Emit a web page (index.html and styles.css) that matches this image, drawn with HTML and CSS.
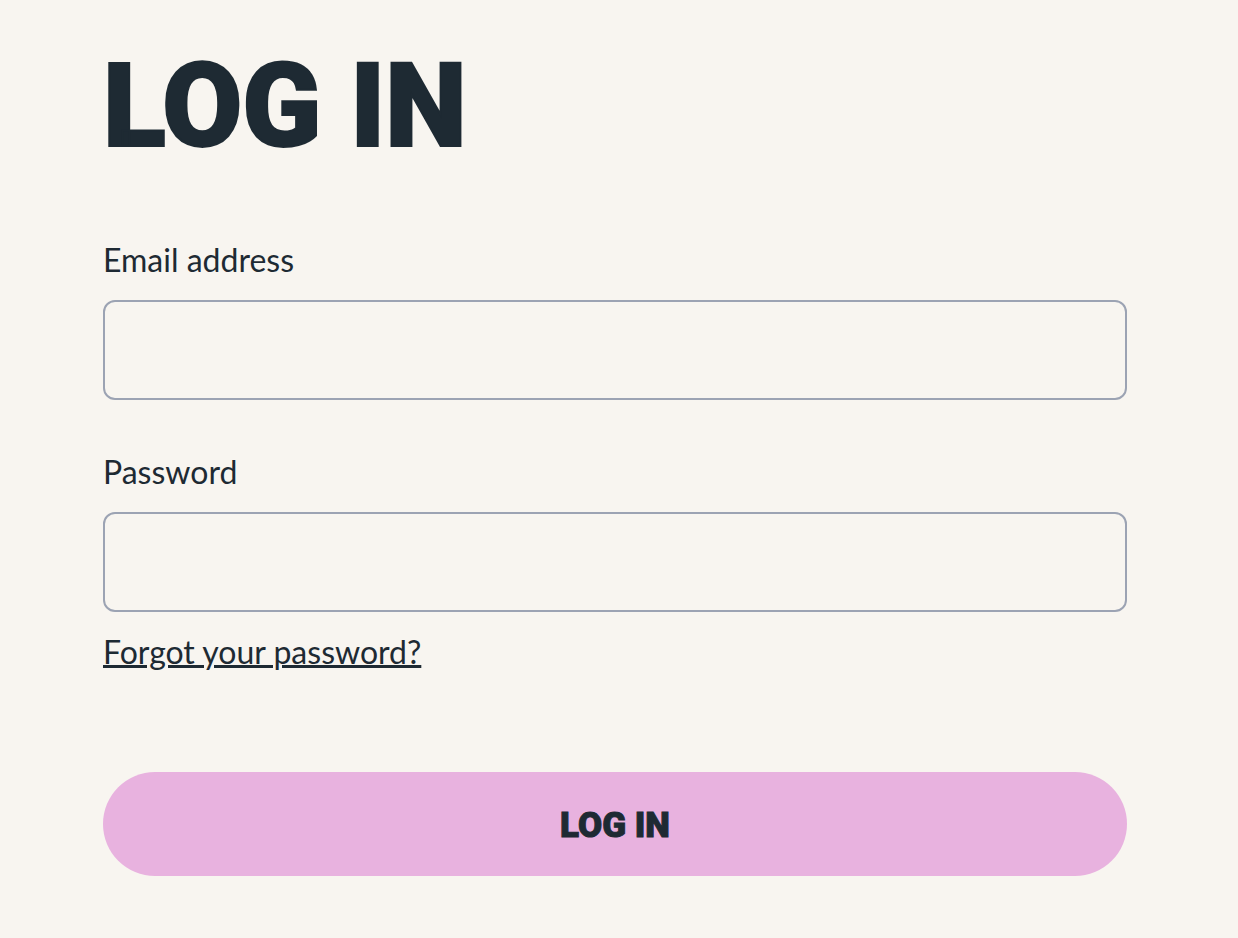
FILE: index.html
```html
<!DOCTYPE html>
<html lang="en">
<head>
<meta charset="utf-8">
<meta name="viewport" content="width=device-width, initial-scale=1">
<title>Log in</title>
<link rel="stylesheet" href="styles.css">
</head>
<body>
<main class="login">
  <h1 class="title">LOG IN</h1>
  <form class="form">
    <div class="field">
      <label class="label" for="email">Email address</label>
      <input class="input" id="email" type="email" autocomplete="email">
    </div>
    <div class="field">
      <label class="label" for="password">Password</label>
      <input class="input" id="password" type="password" autocomplete="current-password">
    </div>
    <a class="forgot" href="#">Forgot your password?</a>
    <button class="submit" type="submit">LOG IN</button>
  </form>
</main>
</body>
</html>
```

FILE: styles.css
```css
* {
  box-sizing: border-box;
}

body {
  margin: 0;
  background: #f8f5f0;
  color: #1e2a33;
  font-family: Lato, sans-serif;
}

.login {
  padding: 42px 111px 62px 103px;
}

.title {
  margin: 0 0 70px;
  font-family: Roboto, sans-serif;
  font-size: 116px;
  font-weight: 900;
  line-height: 128px;
  -webkit-text-stroke: 2px currentColor;
}

.form {
  display: flex;
  flex-direction: column;
}

.field {
  display: flex;
  flex-direction: column;
  gap: 20px;
}

.field + .field {
  margin-top: 52px;
}

.label,
.forgot {
  font-size: 32px;
  line-height: 40px;
}

.input {
  width: 100%;
  height: 100px;
  padding: 0 24px;
  border: 2px solid #9ca3b3;
  border-radius: 12px;
  background: transparent;
  color: inherit;
  font: inherit;
  font-size: 32px;
}

.forgot {
  align-self: flex-start;
  margin-top: 20px;
  color: inherit;
  text-decoration-thickness: 3px;
  text-underline-offset: 1px;
}

.submit {
  height: 104px;
  margin-top: 100px;
  padding: 2px 0 0;
  border: 0;
  border-radius: 52px;
  background: #e8b2df;
  color: inherit;
  font-family: Roboto, sans-serif;
  font-size: 35px;
  font-weight: 900;
  -webkit-text-stroke: 1px currentColor;
}
```
